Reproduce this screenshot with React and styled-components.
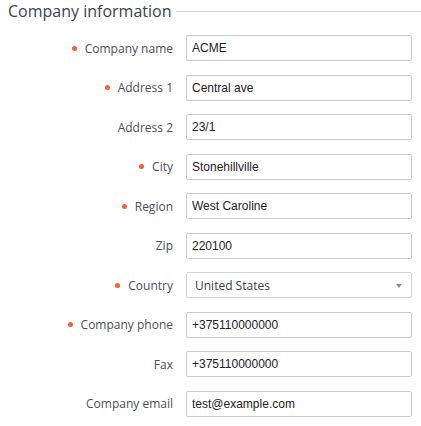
// externals
import React from 'react'
import styled, { createGlobalStyle } from 'styled-components'

// the form fields
const fields = [
    { label: 'Company name', value: 'ACME', required: true },
    { label: 'Address 1', value: 'Central ave', required: true },
    { label: 'Address 2', value: '23/1' },
    { label: 'City', value: 'Stonehillville', required: true },
    { label: 'Region', value: 'West Caroline', required: true },
    { label: 'Zip', value: '220100' },
    { label: 'Country', value: 'United States', required: true, select: true },
    { label: 'Company phone', value: '+375110000000', required: true },
    { label: 'Fax', value: '+375110000000' },
    { label: 'Company email', value: 'test@example.com' },
]

// the company form
export default function App() {
    // render
    return (
        <>
            <Global />
            <Housing>
                <Legend>
                    <Title>Company information</Title>
                    <Rule />
                </Legend>
                <Rows>
                    {fields.map(({ label, value, required, select }) => (
                        <Row key={label}>
                            <Label>
                                {required && <Dot />}
                                {label}
                            </Label>
                            {select ? (
                                <Select>
                                    {value}
                                    <Caret />
                                </Select>
                            ) : (
                                <Input defaultValue={value} />
                            )}
                        </Row>
                    ))}
                </Rows>
            </Housing>
        </>
    )
}

// page defaults
const Global = createGlobalStyle`
    body {
        margin: 0;
        background: #ffffff;
        font-family: "Open Sans", sans-serif;
    }
`

// the container
const Housing = styled.div`
    padding: 0 0 0 8px;
    width: 413px;
`

// the legend
const Legend = styled.div`
    display: flex;
    align-items: center;
    gap: 5px;
    height: 22px;
    margin-bottom: 13px;
`

const Title = styled.div`
    font-size: 16px;
    line-height: 22px;
    color: #3b4150;
    white-space: nowrap;
`

const Rule = styled.div`
    flex: 1;
    height: 1px;
    background: #d4d5de;
`

// the rows
const Rows = styled.div`
    display: flex;
    flex-direction: column;
    gap: 13.55px;
`

const Row = styled.div`
    display: grid;
    grid-template-columns: 165px 226px;
    column-gap: 13px;
    align-items: center;
    height: 26px;
`

const Label = styled.label`
    display: flex;
    align-items: center;
    justify-content: flex-end;
    font-size: 12px;
    color: #4a4e57;
    white-space: nowrap;
`

const Dot = styled.span`
    width: 5px;
    height: 5px;
    border-radius: 50%;
    background: #ef6236;
    margin-right: 8px;
`

// the controls
const Input = styled.input`
    box-sizing: border-box;
    width: 226px;
    height: 26px;
    padding: 0 5px;
    border: 1px solid #c9ccd3;
    border-radius: 2px;
    font-family: "Liberation Sans", Arial, sans-serif;
    font-size: 12px;
    color: #1f2128;
    outline: none;
`

const Select = styled.div`
    box-sizing: border-box;
    display: flex;
    align-items: center;
    justify-content: space-between;
    width: 226px;
    height: 26px;
    padding: 0 9px 0 8px;
    border: 1px solid #cfd2d8;
    border-radius: 2px;
    font-size: 12px;
    color: #3a3e47;
`

const Caret = styled.span`
    width: 0;
    height: 0;
    border-left: 3px solid transparent;
    border-right: 3px solid transparent;
    border-top: 4px solid #8a8d93;
    margin-top: 1px;
`

// end of file
